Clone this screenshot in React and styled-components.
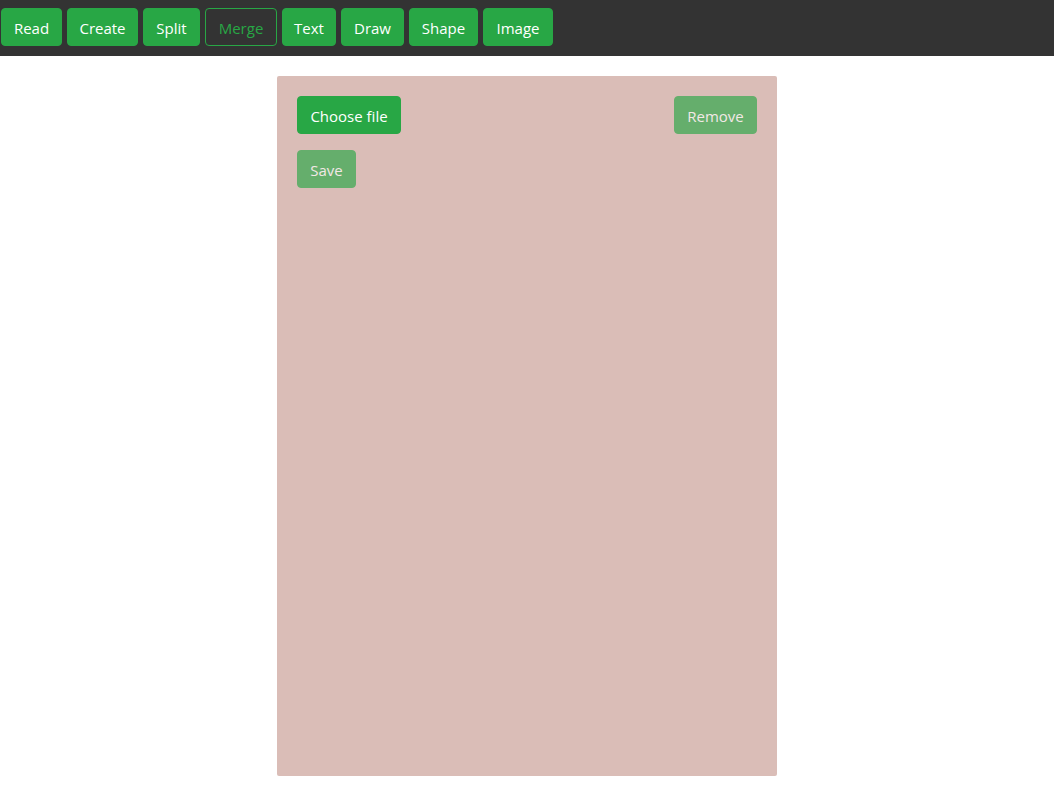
import React, { useRef, useState } from "react";
import styled, { createGlobalStyle } from "styled-components";

const GlobalStyle = createGlobalStyle`
  *, *::before, *::after { box-sizing: border-box; }
  body {
    margin: 0;
    background: #fff;
    font-family: "Segoe UI", "Open Sans", "Noto Sans", sans-serif;
    font-size: 15px;
    line-height: 24px;
  }
`;

const Toolbar = styled.nav`
  display: flex;
  gap: 5px;
  padding: 8px 1px 10px;
  background: #333;
`;

const Button = styled.button`
  height: 38px;
  min-width: ${(p) => (p.$width ? `${p.$width}px` : "auto")};
  padding: 7px 0 5px;
  border: 1px solid #28a745;
  border-radius: 4px;
  background: ${(p) => (p.$outline ? "transparent" : "#28a745")};
  color: ${(p) => (p.$outline ? "#28a745" : "#fff")};
  font: inherit;
  text-align: center;
  white-space: nowrap;
  cursor: pointer;

  &:disabled {
    opacity: 0.65;
    cursor: default;
  }
`;

const Panel = styled.main`
  width: 100%;
  max-width: 500px;
  min-height: 700px;
  margin: 20px auto;
  padding: 20px;
  border-radius: 2px;
  background: #dabdb7;
`;

const Row = styled.div`
  display: flex;
  justify-content: space-between;
  margin-bottom: 16px;
`;

const modes = [
  { name: "Read", width: 61 },
  { name: "Create", width: 71 },
  { name: "Split", width: 57 },
  { name: "Merge", width: 72 },
  { name: "Text", width: 54 },
  { name: "Draw", width: 63 },
  { name: "Shape", width: 69 },
  { name: "Image", width: 70 },
];

export default function App() {
  const [mode, setMode] = useState("Merge");
  const [file, setFile] = useState(null);
  const picker = useRef(null);

  const remove = () => {
    picker.current.value = "";
    setFile(null);
  };

  return (
    <>
      <GlobalStyle />
      <Toolbar>
        {modes.map(({ name, width }) => (
          <Button
            key={name}
            type="button"
            $width={width}
            $outline={mode === name}
            aria-pressed={mode === name}
            onClick={() => setMode(name)}
          >
            {name}
          </Button>
        ))}
      </Toolbar>
      <Panel>
        <Row>
          <Button type="button" $width={104} onClick={() => picker.current.click()}>
            Choose file
          </Button>
          <input
            ref={picker}
            type="file"
            accept="application/pdf"
            hidden
            onChange={(e) => setFile(e.target.files[0] || null)}
          />
          <Button type="button" $width={83} disabled={!file} onClick={remove}>
            Remove
          </Button>
        </Row>
        <Button type="button" $width={59} disabled={!file}>
          Save
        </Button>
      </Panel>
    </>
  );
}
